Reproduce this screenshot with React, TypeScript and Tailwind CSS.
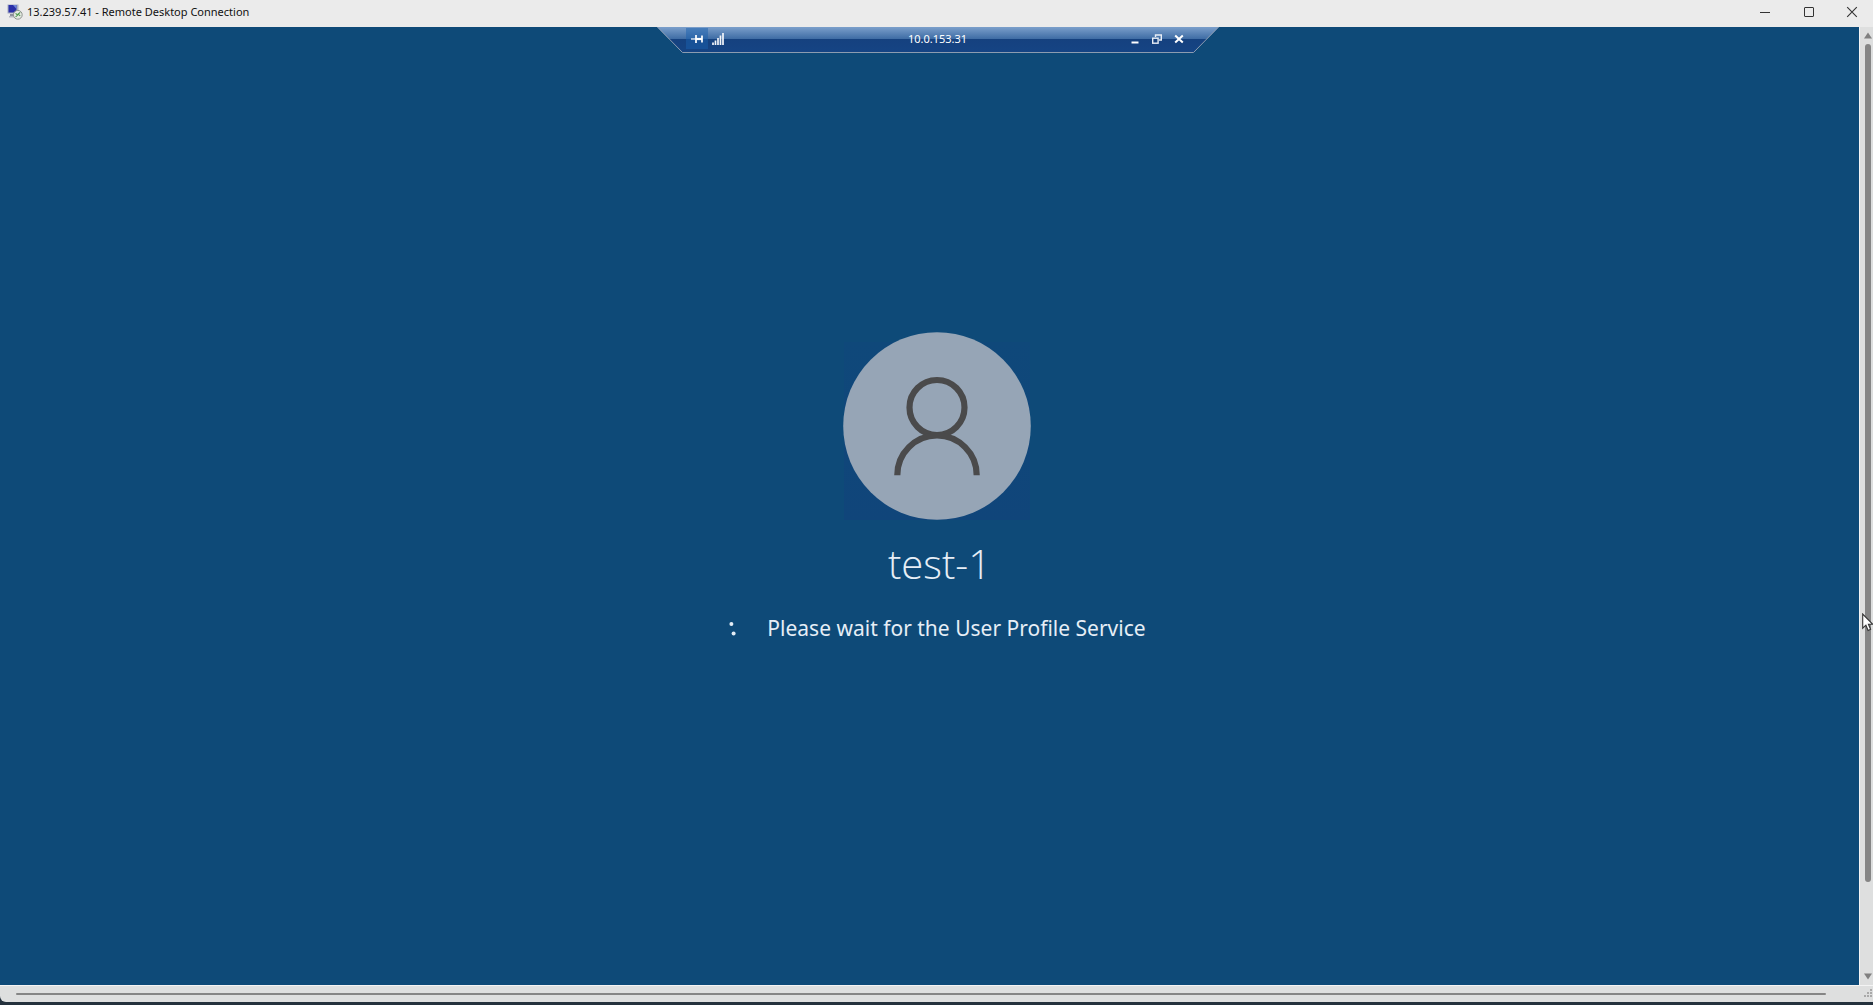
import React from "react";

function TitleBar() {
  return (
    <header className="flex h-[27px] shrink-0 items-center justify-between bg-[#ebebeb] pb-[3px] text-[#111]">
      <div className="flex items-center gap-[4px] pl-[7px]">
        <svg width="16" height="16" viewBox="0 0 16 16" aria-hidden="true">
          <rect x="0.5" y="0.5" width="11" height="9" fill="#aab0c4" />
          <rect x="1.5" y="1" width="8" height="7.5" fill="#2a2fa8" />
          <path d="M6 1h3.5v4z" fill="#6f86d8" />
          <path d="M3 10h5v2H3z" fill="#8b8f9c" />
          <path d="M2 12h7v1.5H2z" fill="#b5b8c2" />
          <circle cx="10.8" cy="10.8" r="4.4" fill="#e4e8e2" stroke="#8d938e" />
          <path d="M8.6 9.4l2 1.7-2 1.7M13.2 8.4l-2 1.7 2 1.7" fill="none" stroke="#4c9a4c" strokeWidth="1.1" />
        </svg>
        <h1 className="text-[11px] leading-[16px]">13.239.57.41 - Remote Desktop Connection</h1>
      </div>
      <div className="flex">
        <button aria-label="Minimize" className="flex h-[24px] w-[44px] items-center justify-center">
          <svg width="12" height="12" viewBox="0 0 12 12"><path d="M1 6.5h10" stroke="#333" /></svg>
        </button>
        <button aria-label="Maximize" className="flex h-[24px] w-[44px] items-center justify-center">
          <svg width="12" height="12" viewBox="0 0 12 12"><rect x="1.5" y="1.5" width="9" height="9" rx="0.5" fill="none" stroke="#333" /></svg>
        </button>
        <button aria-label="Close" className="flex h-[24px] w-[42px] items-center justify-center">
          <svg width="12" height="12" viewBox="0 0 12 12"><path d="M1.2 1.2l9.6 9.6M10.8 1.2l-9.6 9.6" stroke="#333" strokeWidth="1.1" /></svg>
        </button>
      </div>
    </header>
  );
}

function ConnectionBar() {
  return (
    <div className="relative h-[26px] w-[562px] shrink-0">
      <svg className="absolute inset-0" width="562" height="26" viewBox="0 0 562 26" aria-hidden="true">
        <defs>
          <linearGradient id="gloss" x1="0" y1="0" x2="0" y2="1">
            <stop offset="0" stopColor="#7b9fcb" />
            <stop offset="0.46" stopColor="#3f6da5" />
            <stop offset="0.48" stopColor="#15417f" />
            <stop offset="1" stopColor="#154484" />
          </linearGradient>
        </defs>
        <path d="M0 0H562L537 25.5H25z" fill="url(#gloss)" />
        <path d="M0.5 0L25.5 25.5H536.5L561.5 0" fill="none" stroke="#8c9cb0" />
      </svg>
      <div className="relative grid h-[23px] grid-cols-[1fr_auto_1fr] items-center px-[29px] text-white">
        <div className="flex items-center gap-[3px]">
          <button aria-label="Pin the connection bar" className="flex h-[21px] w-[22px] items-center justify-center bg-[#1a5fae]/50">
            <svg width="12" height="10" viewBox="0 0 12 10">
              <path d="M0 5h5" stroke="#fff" strokeWidth="1.2" />
              <path d="M5 1v8M11 1.5v7" stroke="#fff" strokeWidth="1.7" />
              <path d="M5 5h6" stroke="#fff" strokeWidth="2.2" />
            </svg>
          </button>
          <button aria-label="Connection quality" className="flex h-[21px] w-[14px] items-center justify-center">
            <svg width="12" height="12" viewBox="0 0 12 12">
              <path d="M1 9.5v2.5M3.5 7.5v4.5M6 5v7M8.5 2.5v9.5M11 0v12" stroke="#f2f5fa" strokeWidth="1.7" />
            </svg>
          </button>
        </div>
        <span className="text-[11px] leading-[16px]">10.0.153.31</span>
        <div className="flex items-center justify-end">
          <button aria-label="Minimize session" className="flex h-[21px] w-[22px] items-center justify-center">
            <svg width="10" height="10" viewBox="0 0 10 10"><path d="M1.5 8.5h7" stroke="#fff" strokeWidth="2" /></svg>
          </button>
          <button aria-label="Restore session" className="flex h-[21px] w-[22px] items-center justify-center">
            <svg width="10" height="10" viewBox="0 0 10 10" fill="none" stroke="#e8eef6">
              <path d="M3.5 3V1H9.3V6H7" strokeWidth="1.4" />
              <rect x="0.7" y="4.2" width="5.4" height="5" strokeWidth="1.4" />
            </svg>
          </button>
          <button aria-label="Disconnect" className="flex h-[21px] w-[22px] items-center justify-center">
            <svg width="10" height="10" viewBox="0 0 10 10"><path d="M1.2 1.5l7.6 7M8.8 1.5l-7.6 7" stroke="#fff" strokeWidth="2" /></svg>
          </button>
        </div>
      </div>
    </div>
  );
}

function Avatar() {
  return (
    <svg width="188" height="188" viewBox="0 0 188 188" role="img" aria-label="User picture">
      <defs>
        <linearGradient id="tint" x1="0" y1="0" x2="0" y2="1">
          <stop offset="0" stopColor="#0f487a" />
          <stop offset="1" stopColor="#10457a" />
        </linearGradient>
      </defs>
      <rect x="1" y="10" width="186" height="178" fill="url(#tint)" />
      <circle cx="94" cy="94" r="93.8" fill="#96a5b6" />
      <circle cx="94" cy="75.5" r="27.5" fill="none" stroke="#4a4a4b" strokeWidth="6.2" />
      <path d="M54.3 143.2a39.7 39.7 0 0 1 79.4 0" fill="none" stroke="#4a4a4b" strokeWidth="6.2" />
    </svg>
  );
}

function VerticalScrollbar() {
  return (
    <div className="relative flex w-[14px] shrink-0 flex-col items-center border-l border-[#f4f4f4] bg-[#dedfdf] pl-[3px]">
      <button aria-label="Scroll up" className="flex h-[17px] items-center">
        <svg width="8" height="7" viewBox="0 0 8 7"><path d="M4 0.5L8 6.5H0z" fill="#808080" /></svg>
      </button>
      <div className="flex w-[6px] grow flex-col">
        <div className="h-[90.7%] rounded-full bg-[#858585]" />
      </div>
      <button aria-label="Scroll down" className="flex h-[17px] items-center">
        <svg width="8" height="7" viewBox="0 0 8 7"><path d="M4 6.5L8 0.5H0z" fill="#808080" /></svg>
      </button>
      <svg className="absolute top-[61%] left-[2px] mt-[2px]" width="12" height="19" viewBox="0 0 12 19" aria-hidden="true">
        <path d="M0.7 1v14.2l3.2-3 2.2 5.2 2.5-1.1-2.2-5h4.4z" fill="#fff" stroke="#333" strokeWidth="1.1" />
      </svg>
    </div>
  );
}

export default function App() {
  return (
    <div className="flex h-screen flex-col overflow-hidden bg-[#24313d] font-['Noto_Sans','Open_Sans',sans-serif]">
      <TitleBar />
      <div className="flex min-h-0 grow">
        <main className="flex grow flex-col items-center bg-[#0e4a78] pl-[16px] text-[#e6eef6]">
          <ConnectionBar />
          <section className="flex grow flex-col items-center justify-center pb-[62px]">
            <Avatar />
            <h2 className="mt-[14px] pl-[4px] font-['Open_Sans','Noto_Sans',sans-serif] text-[40px] leading-[60px] font-light">test-1</h2>
            <div className="mt-[18px] flex items-center gap-[30px]" role="status">
              <svg width="8" height="16" viewBox="0 0 8 16" aria-hidden="true">
                <circle cx="2.4" cy="4" r="2" fill="#e4edf5" />
                <circle cx="4.6" cy="13.6" r="2" fill="#e4edf5" />
              </svg>
              <p className="text-[21px] leading-[32px]">Please wait for the User Profile Service</p>
            </div>
          </section>
        </main>
        <VerticalScrollbar />
      </div>
      <footer className="flex h-[17px] shrink-0 items-center rounded-bl-md border-t border-[#f4f4f4] bg-[#dedfdf] pl-[16px]">
        <div className="h-[2px] grow rounded-full bg-[#858585]" />
        <svg className="ml-[38px] shrink-0" width="9" height="10" viewBox="0 0 9 10" aria-hidden="true">
          <path d="M6 0h2v2H6zM3 3h2v2H3zM6 3h2v2H6zM0 6h2v2H0zM3 6h2v2H3zM6 6h2v2H6z" fill="#a9a9a9" />
        </svg>
      </footer>
      <div className="h-[3px] shrink-0 bg-[#24313d]" />
    </div>
  );
}
